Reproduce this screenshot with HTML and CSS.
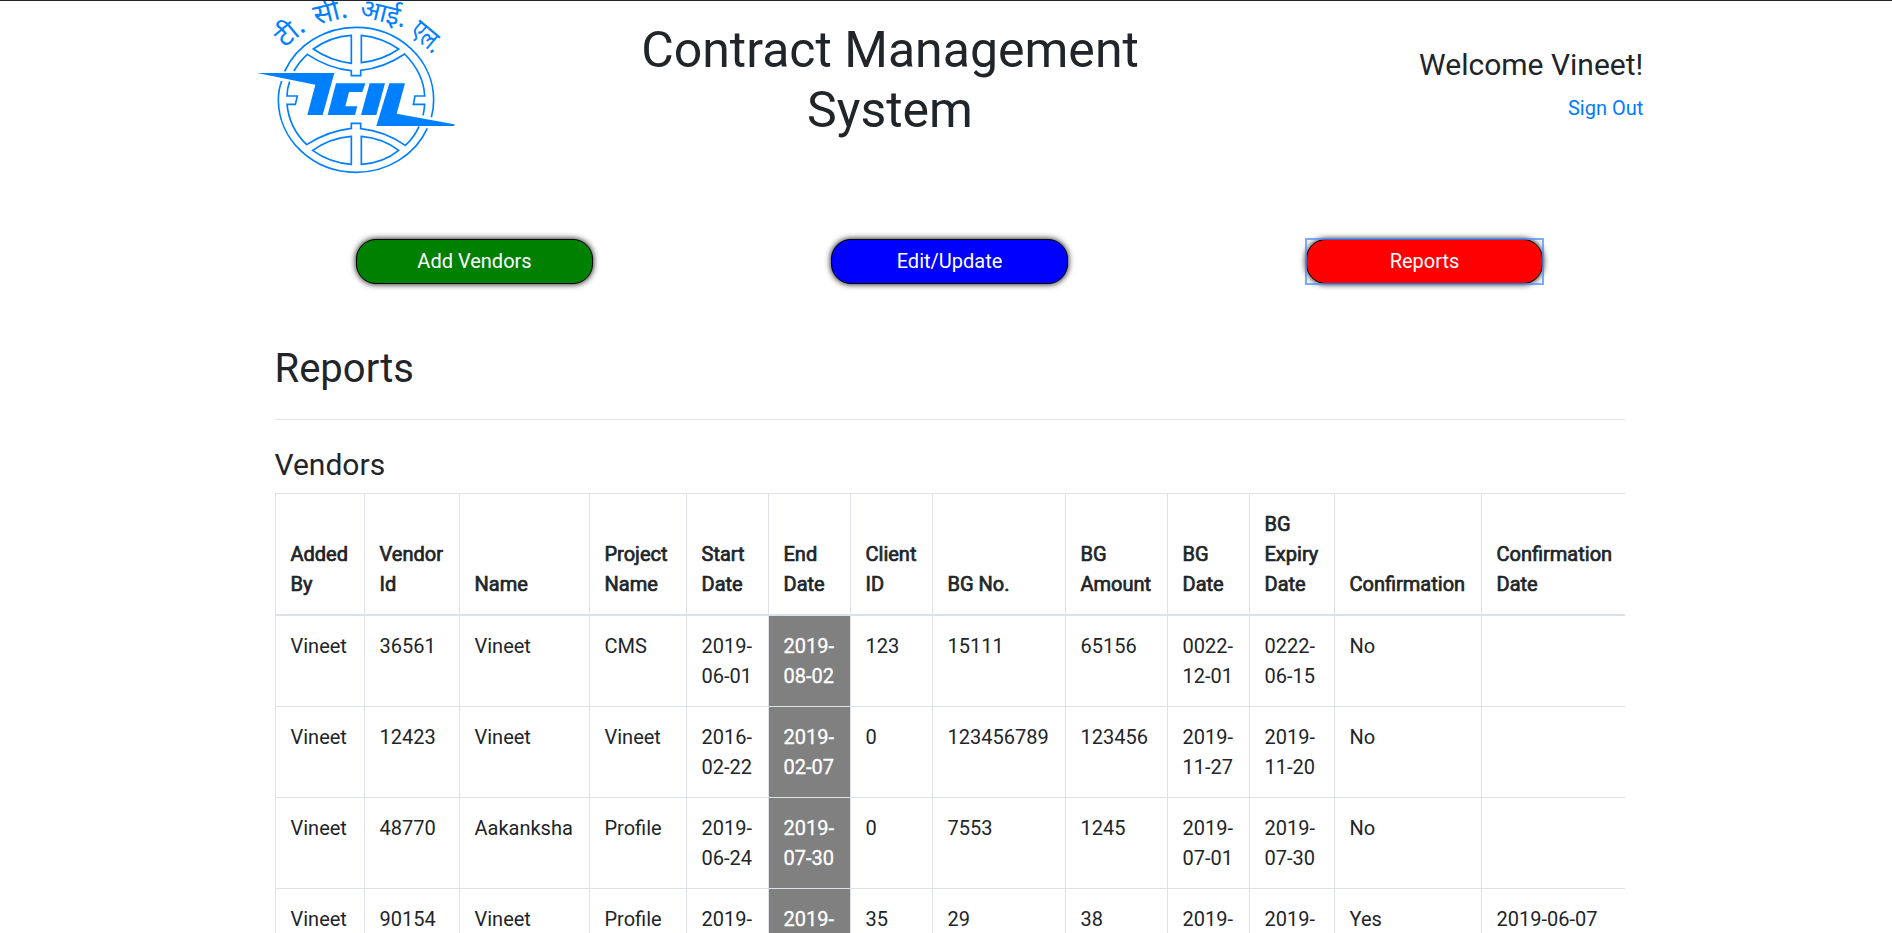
FILE: index.html
```html
<!DOCTYPE html>
<html lang="en">
<head>
<meta charset="utf-8">
<title>Contract Management System</title>
<link rel="stylesheet" href="styles.css">
</head>
<body>
<div class="container">
  <header class="header">
    <svg class="logo" viewBox="0 0 645 540" role="img" aria-label="TCIL">
      <g class="logo-lines">
        <path d="M104 214A233 218 0 0 1 318 82A233 218 0 0 1 551 300Q551 328 544 352M532 385A233 218 0 0 1 318 517A233 218 0 0 1 85 300Q85 270 95 243"/>
        <path d="M304 106V190Q240 182 190 147Q240 110 304 106ZM334 106V188Q400 180 446 147Q395 112 334 106Z"/>
        <path d="M304 409V493Q238 488 188 451Q240 414 304 409ZM334 409V493Q400 489 446 451Q400 415 334 409Z"/>
        <path d="M132 213Q146 187 172 163Q235 205 304 212V227H332V211Q402 204 464 162Q521 220 524 288H495L490 313H524Q523 330 519 346"/>
        <path d="M119 245Q111 266 111 288H142L136 313H111Q118 384 170 434Q235 392 304 385V370H332V386Q403 393 466 436Q493 412 507 379"/>
      </g>
      <g class="logo-solid">
        <path d="M21 219H253L218 345H172L196 254Z"/>
        <path d="M258 250H346L337 276H297L286 319H322L315 345H233Z"/>
        <path d="M359 250H405L379 345H333Z"/>
        <path d="M418 250H465L440 341L613 373V378H379Z"/>
      </g>
      <g class="logo-text">
        <text font-size="84" transform="translate(104 145) rotate(-40)">टी.</text>
        <text font-size="84" transform="translate(198 75) rotate(-14)">सी.</text>
        <text font-size="79" transform="translate(326 48) rotate(14)">आई.</text>
        <text font-size="86" transform="translate(475 100) rotate(40) scale(.76 1)">एल.</text>
      </g>
    </svg>
    <h1 class="title">Contract Management System</h1>
    <div class="account">
      <p class="welcome">Welcome Vineet!</p>
      <a class="signout">Sign Out</a>
    </div>
  </header>
  <nav class="actions">
    <button class="btn add">Add Vendors</button>
    <button class="btn edit">Edit/Update</button>
    <button class="btn reports">Reports</button>
  </nav>
  <main class="content">
    <h2 class="heading">Reports</h2>
    <hr class="rule">
    <h3 class="subheading">Vendors</h3>
    <div class="table-wrap">
      <table class="table">
        <colgroup><col class="w89"><col class="w95"><col class="w130"><col class="w97"><col class="w82"><col class="w82"><col class="w82"><col class="w133"><col class="w102"><col class="w82"><col class="w85"><col class="w147"><col class="w147"></colgroup>
        <thead><tr><th>Added By</th><th>Vendor Id</th><th>Name</th><th>Project Name</th><th>Start Date</th><th>End Date</th><th>Client ID</th><th>BG No.</th><th>BG Amount</th><th>BG Date</th><th>BG Expiry Date</th><th>Confirmation</th><th>Confirmation Date</th></tr></thead>
        <tbody>
          <tr class="first"><td>Vineet</td><td>36561</td><td>Vineet</td><td>CMS</td><td>2019-06-01</td><td class="end">2019-08-02</td><td>123</td><td>15111</td><td>65156</td><td>0022-12-01</td><td>0222-06-15</td><td>No</td><td></td></tr>
          <tr><td>Vineet</td><td>12423</td><td>Vineet</td><td>Vineet</td><td>2016-02-22</td><td class="end">2019-02-07</td><td>0</td><td>123456789</td><td>123456</td><td>2019-11-27</td><td>2019-11-20</td><td>No</td><td></td></tr>
          <tr><td>Vineet</td><td>48770</td><td>Aakanksha</td><td>Profile</td><td>2019-06-24</td><td class="end">2019-07-30</td><td>0</td><td>7553</td><td>1245</td><td>2019-07-01</td><td>2019-07-30</td><td>No</td><td></td></tr>
          <tr><td>Vineet</td><td>90154</td><td>Vineet</td><td>Profile</td><td>2019-</td><td class="end">2019-</td><td>35</td><td>29</td><td>38</td><td>2019-</td><td>2019-</td><td>Yes</td><td>2019-06-07</td></tr>
        </tbody>
      </table>
    </div>
  </main>
</div>
</body>
</html>
```
FILE: styles.css
```css
* { box-sizing: border-box; }
html { overflow: hidden; }
body {
  margin: 0;
  height: 933px;
  overflow: hidden;
  border-top: 1px solid #212529;
  background: #fff;
  color: #212529;
  font: 400 20px/30px Roboto, "Noto Sans", sans-serif;
}
h1, h2, h3, p { margin: 0; font-weight: 400; line-height: 1.2; }
.container { width: 1425px; margin-left: 237px; }
.header { display: flex; align-items: flex-start; height: 238px; padding: 0 18.75px 0 13px; }
.logo { flex: none; width: 215px; height: 180px; margin-top: -1px; }
.logo-lines { fill: none; stroke: #0080ff; stroke-width: 5; }
.logo-solid { fill: #0080ff; }
.logo-text { fill: #0080ff; font-family: "Noto Sans", sans-serif; }
.title { width: 520px; margin: 19px 0 0 165px; font-size: 50px; text-align: center; }
.account { margin: 46px 0 0 auto; text-align: right; }
.welcome { margin-bottom: 10px; font-size: 30px; }
.signout { display: block; color: #007bff; }
.actions { display: grid; grid-template-columns: repeat(3, 1fr); justify-items: center; }
.btn {
  width: 237px;
  height: 45px;
  padding: 0 0 1px;
  border: 1px solid #000;
  border-radius: 20px;
  box-shadow: 0 0 6px #000;
  color: #fff;
  font: inherit;
}
.add { background: green; }
.edit { background: blue; }
.reports { position: relative; background: red; }
.reports::after { content: ""; position: absolute; inset: -2px; border: 2px solid rgba(77, 144, 254, 0.75); }
.content { padding: 61px 37px 0 38px; }
.heading { font-size: 40px; }
.rule { height: 1px; margin: 26px 0 27px; border: 0; background: #e5e5e5; }
.subheading { margin-bottom: 10px; font-size: 30px; }
.heading, .subheading { margin-left: -0.5px; }
.table-wrap { overflow: hidden; }
.table { width: 1353px; table-layout: fixed; border-collapse: collapse; }
.table th, .table td { padding: 14.5px 0 15px 14.5px; border: 1px solid #dee2e6; text-align: left; vertical-align: top; }
.table th { height: 121px; padding-top: 14px; padding-right: 10px; border-bottom-width: 2px; font-weight: 400; vertical-align: bottom; -webkit-text-stroke: 0.7px #212529; }
.table td { height: 91px; }
.table .first td { height: 92px; padding-top: 15.5px; }
.table .end { background: gray; color: #fff; -webkit-text-stroke: 0.3px #fff; }
.w82 { width: 82px; }
.w85 { width: 85px; }
.w89 { width: 89px; }
.w95 { width: 95px; }
.w97 { width: 97px; }
.w102 { width: 102px; }
.w130 { width: 130px; }
.w133 { width: 133px; }
.w147 { width: 147px; }
```
